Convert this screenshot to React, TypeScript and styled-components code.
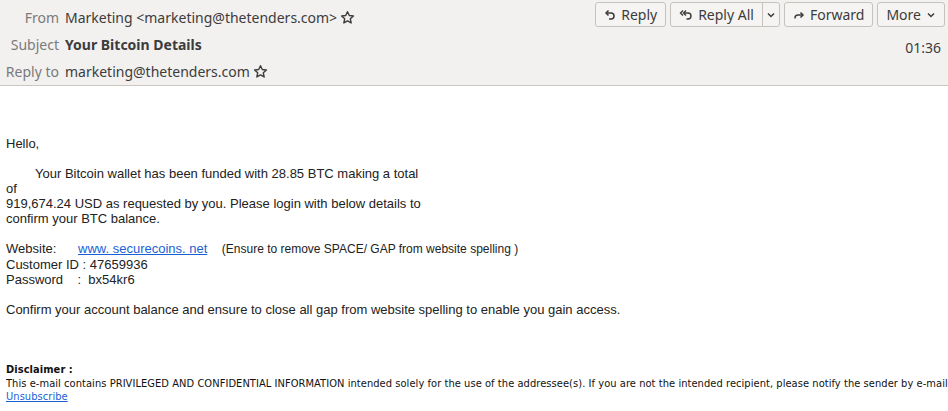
import React from "react";
import styled, { createGlobalStyle } from "styled-components";

const Global = createGlobalStyle`
  html, body { margin: 0; padding: 0; background: #ffffff; }
  body { width: 948px; height: 411px; overflow: hidden; }
`;

const Page = styled.div`
  width: 948px;
  height: 411px;
  overflow: hidden;
  background: #fff;
`;

const Header = styled.header`
  height: 85px;
  background: #f2f1f0;
  border-bottom: 1px solid #cdc7c2;
  display: flex;
  justify-content: space-between;
  font-family: "Noto Sans", "Open Sans", sans-serif;
  font-size: 14px;
  color: #3c3c3c;
`;

const Fields = styled.div`
  display: grid;
  grid-template-columns: 59px auto;
  grid-auto-rows: 27px;
  column-gap: 6px;
  padding-top: 4px;
`;

const Label = styled.div`
  text-align: right;
  color: #7a7a7a;
  line-height: 27px;
  white-space: nowrap;
`;

const Value = styled.div<{ $bold?: boolean }>`
  display: flex;
  align-items: center;
  gap: 3px;
  font-weight: ${(p) => (p.$bold ? 700 : 400)};
  white-space: nowrap;
`;

const Right = styled.div`
  display: flex;
  flex-direction: column;
  align-items: flex-end;
  padding: 2px 3px 0 0;
`;

const Toolbar = styled.div`
  display: flex;
  gap: 4px;
`;

const Btn = styled.button`
  height: 25px;
  display: flex;
  align-items: center;
  gap: 5px;
  padding: 0 8px;
  background: #f5f4f3;
  border: 1px solid #c6c2be;
  border-radius: 3px;
  font-family: inherit;
  font-size: 14px;
  color: #3c3c3c;
`;

const Split = styled.div`
  display: flex;
  height: 25px;
  border: 1px solid #c6c2be;
  border-radius: 3px;
  background: #f5f4f3;
  box-sizing: border-box;
`;

const SplitPart = styled.button<{ $arrow?: boolean }>`
  display: flex;
  align-items: center;
  gap: 5px;
  padding: ${(p) => (p.$arrow ? "0 3px" : "0 8px")};
  background: transparent;
  border: none;
  border-left: ${(p) => (p.$arrow ? "1px solid #c6c2be" : "none")};
  font-family: inherit;
  font-size: 14px;
  color: #3c3c3c;
`;

const Time = styled.div`
  margin-top: 13px;
  margin-right: 4px;
  line-height: 16px;
`;

const Body = styled.main`
  padding: 50px 6px 0 6px;
  font-family: "Liberation Sans", Arial, sans-serif;
  font-size: 13px;
  line-height: 15px;
  color: #222;
`;

const Line = styled.div<{ $indent?: boolean }>`
  min-height: 15px;
  white-space: pre;
  padding-left: ${(p) => (p.$indent ? "29px" : "0")};
`;

const Link = styled.a`
  color: #1a5fd6;
  text-decoration: underline;
`;

const Note = styled.span`
  font-size: 12px;
`;

const Disclaimer = styled.div`
  margin-top: 46px;
  margin-right: -20px;
  font-family: "DejaVu Sans Condensed", "DejaVu Sans", sans-serif;
  font-size: 11px;
  letter-spacing: 0.06px;
  line-height: 13.5px;
  color: #111;
  white-space: nowrap;
  overflow: hidden;
`;

const DiscTitle = styled.div`
  font-weight: 700;
`;

const SmallLink = styled.a`
  color: #1a5fd6;
  text-decoration: underline;
`;

const Star = () => (
  <svg width="15" height="15" viewBox="0 0 16 16">
    <path
      d="M8 1.8l1.9 4.1 4.4.5-3.3 3 .9 4.4L8 11.6 4.1 13.8 5 9.4 1.7 6.4l4.4-.5z"
      fill="none"
      stroke="#3c3c3c"
      strokeWidth="1.5"
      strokeLinejoin="round"
    />
  </svg>
);

const ReplyIcon = () => (
  <svg width="12" height="12" viewBox="0 0 12 12">
    <path d="M4.5 1.5L2 4l2.5 2.5" fill="none" stroke="#3c3c3c" strokeWidth="1.5" />
    <path d="M2.5 4h4.5a3 3 0 0 1 0 6H5" fill="none" stroke="#3c3c3c" strokeWidth="1.5" />
  </svg>
);

const ReplyAllIcon = () => (
  <svg width="14" height="12" viewBox="0 0 14 12">
    <path d="M4 1.5L1.5 4 4 6.5" fill="none" stroke="#3c3c3c" strokeWidth="1.4" />
    <path d="M7 1.5L4.5 4 7 6.5" fill="none" stroke="#3c3c3c" strokeWidth="1.4" />
    <path d="M5 4h4a3 3 0 0 1 0 6H7.5" fill="none" stroke="#3c3c3c" strokeWidth="1.4" />
  </svg>
);

const ForwardIcon = () => (
  <svg width="12" height="12" viewBox="0 0 12 12">
    <path d="M7.5 3.5L10 6 7.5 8.5" fill="none" stroke="#3c3c3c" strokeWidth="1.5" />
    <path d="M9.5 6H5a3 3 0 0 0-3 3v0.5" fill="none" stroke="#3c3c3c" strokeWidth="1.5" />
  </svg>
);

const Chevron = () => (
  <svg width="10" height="10" viewBox="0 0 10 10">
    <path d="M2 3.5L5 6.5 8 3.5" fill="none" stroke="#3c3c3c" strokeWidth="1.5" />
  </svg>
);

export default function App() {
  return (
    <Page>
      <Global />
      <Header>
        <Fields>
          <Label>From</Label>
          <Value>
            Marketing &lt;marketing@thetenders.com&gt;
            <Star />
          </Value>
          <Label>Subject</Label>
          <Value $bold>Your Bitcoin Details</Value>
          <Label>Reply to</Label>
          <Value>
            marketing@thetenders.com
            <Star />
          </Value>
        </Fields>
        <Right>
          <Toolbar>
            <Btn>
              <ReplyIcon />
              Reply
            </Btn>
            <Split>
              <SplitPart>
                <ReplyAllIcon />
                Reply All
              </SplitPart>
              <SplitPart $arrow>
                <Chevron />
              </SplitPart>
            </Split>
            <Btn>
              <ForwardIcon />
              Forward
            </Btn>
            <Btn>
              More
              <Chevron />
            </Btn>
          </Toolbar>
          <Time>01:36</Time>
        </Right>
      </Header>
      <Body>
        <Line>Hello,</Line>
        <Line />
        <Line $indent>Your Bitcoin wallet has been funded with 28.85 BTC making a total</Line>
        <Line>of</Line>
        <Line>919,674.24 USD as requested by you. Please login with below details to</Line>
        <Line>confirm your BTC balance.</Line>
        <Line />
        <Line>
          {"Website:      "}
          <Link href="#">www. securecoins. net</Link>
          {"    "}
          <Note>(Ensure to remove SPACE/ GAP from website spelling )</Note>
        </Line>
        <Line>Customer ID : 47659936</Line>
        <Line>{"Password    :  bx54kr6"}</Line>
        <Line />
        <Line>Confirm your account balance and ensure to close all gap from website spelling to enable you gain access.</Line>
        <Disclaimer>
          <DiscTitle>Disclaimer :</DiscTitle>
          <div>
            This e-mail contains PRIVILEGED AND CONFIDENTIAL INFORMATION intended solely for the use of the addressee(s). If you are not the intended recipient, please notify the sender by e-mail
          </div>
          <SmallLink href="#">Unsubscribe</SmallLink>
        </Disclaimer>
      </Body>
    </Page>
  );
}
